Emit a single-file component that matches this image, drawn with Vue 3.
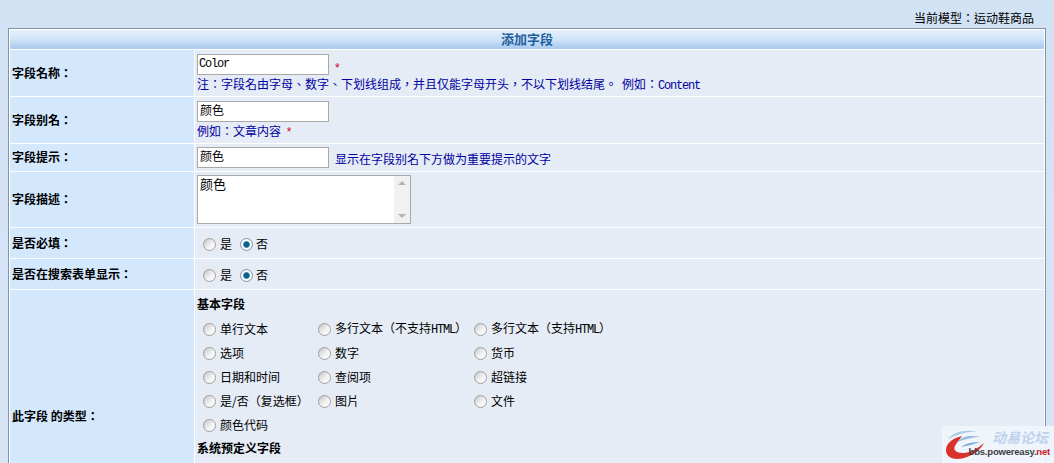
<script setup>
const basics = [
  [['单行文本'], ['多行文本（不支持', 'HTML', '）'], ['多行文本（支持', 'HTML', '）']],
  [['选项'], ['数字'], ['货币']],
  [['日期和时间'], ['查阅项'], ['超链接']],
  [['是/否（复选框）'], ['图片'], ['文件']],
  [['颜色代码']],
]
</script>

<template>
  <div class="page">
    <div class="model">当前模型：运动鞋商品</div>
    <table class="form">
      <colgroup><col class="c1" /><col /></colgroup>
      <tbody>
        <tr><th colspan="2" class="title">添加字段</th></tr>
        <tr class="r1">
          <td class="lab">字段名称：</td>
          <td class="val">
            <div class="line"><input class="txt mono" value="Color" /><span class="star">*</span></div>
            <div class="note">注：字段名由字母、数字、下划线组成，并且仅能字母开头，不以下划线结尾。<span class="eg">例如：</span><span class="mono">Content</span></div>
          </td>
        </tr>
        <tr class="r1">
          <td class="lab">字段别名：</td>
          <td class="val">
            <div class="line"><input class="txt" value="颜色" /></div>
            <div class="note">例如：文章内容 <span class="star">*</span></div>
          </td>
        </tr>
        <tr class="r3">
          <td class="lab">字段提示：</td>
          <td class="val">
            <div class="line"><input class="txt" value="颜色" /><span class="note side">显示在字段别名下方做为重要提示的文字</span></div>
          </td>
        </tr>
        <tr class="r4">
          <td class="lab">字段描述：</td>
          <td class="val">
            <div class="area">
              <span class="area-text">颜色</span>
              <div class="scroll"><i class="up"></i><i class="down"></i></div>
            </div>
          </td>
        </tr>
        <tr class="r5">
          <td class="lab">是否必填：</td>
          <td class="val">
            <div class="yn">
              <label><input type="radio" name="a" />是</label>
              <label><input type="radio" name="a" checked />否</label>
            </div>
          </td>
        </tr>
        <tr class="r5">
          <td class="lab">是否在搜索表单显示：</td>
          <td class="val">
            <div class="yn">
              <label><input type="radio" name="b" />是</label>
              <label><input type="radio" name="b" checked />否</label>
            </div>
          </td>
        </tr>
        <tr class="r7">
          <td class="lab">此字段 的类型：</td>
          <td class="val types">
            <div class="group">基本字段</div>
            <div class="grid">
              <template v-for="row in basics">
                <label v-for="item in row" :key="item[0]">
                  <input type="radio" name="t" /><span>{{ item[0] }}<span v-if="item[1]" class="mono">{{ item[1] }}</span>{{ item[2] }}</span>
                </label>
              </template>
            </div>
            <div class="group second">系统预定义字段</div>
          </td>
        </tr>
      </tbody>
    </table>
    <div class="mark">
      <svg width="40" height="34" viewBox="0 0 40 34">
        <path d="M17 8C7 10 1 16 1 22C1 31 12 33 22 29C30 26 36 21 39 15C33 20 26 25 18 25C11 25 8 22 10 18C12 14 15 11 17 8Z" fill="#d8322a" />
        <path d="M3 11C9 4 20 1 33 4C23 3 13 6 3 11Z" fill="#a9cbe6" />
        <path d="M12 14C17 8 27 7 35 9C28 9 20 11 12 14Z" fill="#90bbdf" />
        <path d="M16 19C21 15 28 14 35 14C29 16 23 18 16 19Z" fill="#7fb0da" />
      </svg>
      <div class="mark-text">
        <span class="cn">动易论坛</span>
        <span class="url">bbs.powereasy.<b>net</b></span>
      </div>
    </div>
  </div>
</template>

<style>
html, body { margin: 0; background: #d4e3f5; overflow: hidden; }
</style>

<style scoped>
.page {
  position: relative;
  width: 1054px;
  height: 463px;
  overflow: hidden;
  background: linear-gradient(#d2e2f5, #d6e4f5);
  font: 12px/16px "Noto Sans CJK TC", "Liberation Sans", sans-serif;
  color: #000;
}
.model {
  height: 28px;
  box-sizing: border-box;
  padding: 10px 20px 0 0;
  text-align: right;
  line-height: 16px;
}
.form {
  width: 1038px;
  margin-left: 8px;
  border: 1px solid #7f93ab;
  border-collapse: separate;
  border-spacing: 1px;
  background: #fff;
  table-layout: fixed;
}
.c1 { width: 184px; }
td, th { padding: 0; }
.title {
  height: 19px;
  background: linear-gradient(#e6f1fc, #d0e3f8 50%, #aecdf0 90%);
  color: #1f5f9e;
  font-weight: bold;
  font-size: 13px;
  line-height: 17px;
  padding-bottom: 2px;
  box-sizing: border-box;
  text-align: center;
}
.r1 { height: 46px; }
.r3 { height: 27px; }
.r4 { height: 55px; }
.r5 { height: 30px; }
.r7 { height: 252px; }
.lab {
  background: #d3e7fd;
  padding: 0 0 1px 2px;
  font-weight: bold;
  vertical-align: middle;
}
.val { background: #e5ecf6; padding-left: 2px; vertical-align: top; }
.line { display: flex; align-items: center; height: 26px; padding-top: 3px; box-sizing: border-box; }
.r3 .line { padding-top: 2px; height: 25px; }
.txt {
  box-sizing: border-box;
  width: 132px;
  height: 21px;
  border: 1px solid #a9a9a9;
  background: #fff;
  padding: 0 2px 5px;
  font: 12px/16px "Noto Sans CJK TC", sans-serif;
  color: #000;
  outline: none;
}
.mono { font-family: "Liberation Mono", "DejaVu Sans Mono", monospace; font-size: 12px; letter-spacing: -1.2px; }
.txt.mono { font-family: "Liberation Mono", monospace; font-size: 12px; letter-spacing: -1.2px; padding: 0 2px 2px 1px; }
.eg { margin-left: 5px; }
.star { color: #d0021b; margin: 7px 0 0 6px; font-family: "Liberation Sans", sans-serif; }
.note { color: #0000a0; line-height: 16px; }
.note .star { margin-left: 3px; }
.side { margin-left: 6px; margin-top: 3px; }
.area {
  box-sizing: border-box;
  width: 214px;
  height: 49px;
  margin-top: 3px;
  border: 1px solid #a9a9a9;
  background: #fff;
  position: relative;
  padding: 0 2px;
  font-size: 13px;
}
.area-text { line-height: 16px; }
.scroll {
  position: absolute;
  top: 0;
  right: 0;
  width: 16px;
  height: 47px;
  background: #f1f1f1;
}
.up, .down {
  position: absolute;
  left: 4px;
  border-left: 4px solid transparent;
  border-right: 4px solid transparent;
}
.up { top: 5px; border-bottom: 4px solid #b4b4b4; }
.down { bottom: 5px; border-top: 4px solid #b4b4b4; }
.yn { display: flex; gap: 8px; padding: 8px 0 0 6px; }
.yn label:last-child input { margin-right: 3px; }
label { display: flex; align-items: center; white-space: nowrap; height: 16px; }
input[type="radio"] {
  appearance: none;
  box-sizing: border-box;
  width: 13px;
  height: 13px;
  margin: 0 4px 0 0;
  border-radius: 50%;
  border: 1px solid #a0a0a0;
  background: linear-gradient(135deg, #c4c4c4, #f2f2f2 55%, #fff);
  flex: none;
}
input[type="radio"]:checked {
  border-color: #8496ad;
  background: radial-gradient(circle, #0f5f8a 0 2.5px, #3f93b8 3px, #fff 3.8px, #e0e0e0);
}
.types { padding-top: 6px; }
.group { font-weight: bold; height: 16px; }
.grid {
  display: grid;
  grid-template-columns: 115px 156px max-content;
  grid-auto-rows: 24px;
  justify-content: start;
  padding: 9px 0 0 6px;
}
.second { margin-top: -1px; }
.mark {
  position: absolute;
  left: 942px;
  top: 426px;
  width: 112px;
  height: 37px;
  background: rgba(240, 245, 251, 0.92);
  display: flex;
  align-items: flex-start;
  padding: 2px 0 0 3px;
  box-sizing: border-box;
  overflow: hidden;
}
.mark-text {
  display: flex;
  flex-direction: column;
  align-items: flex-end;
  width: 71px;
  margin-left: -6px;
  flex: none;
}
.cn {
  color: #bed1ee;
  font-size: 14px;
  line-height: 18px;
  font-style: italic;
  font-weight: bold;
  margin-right: 2px;
}
.url {
  font: bold 9.5px/12px "Liberation Sans", sans-serif;
  color: #3c3c44;
  letter-spacing: -0.2px;
  white-space: nowrap;
}
.url b { color: #c8202a; }
</style>
